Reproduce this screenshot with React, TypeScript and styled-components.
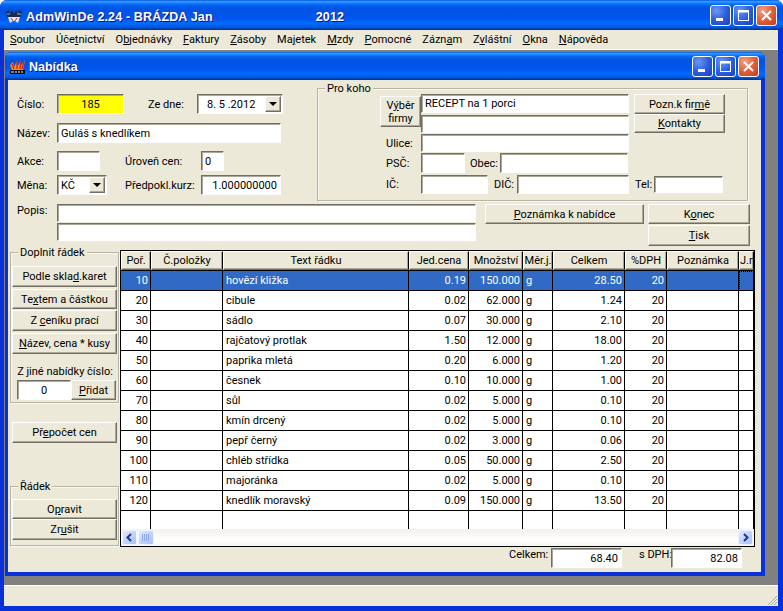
import styled, { createGlobalStyle } from 'styled-components';

const GlobalStyle = createGlobalStyle`
  html, body {
    margin: 0;
    padding: 0;
    background: #fff;
  }
  body {
    font-family: Roboto, 'Liberation Sans', Arial, sans-serif;
    font-size: 11px;
    color: #000;
  }
  u {
    text-underline-offset: 1px;
  }
`;

const TITLE_GRADIENT = `linear-gradient(180deg, #0058e6 0%, #3a93ff 5%, #288eff 8%, #127dff 11%, #036ffc 14%,
  #0262ee 18%, #0057e5 24%, #0054e3 30%, #0055eb 56%, #005bf5 66%, #026afe 76%, #0062ef 86%, #0052d6 92%,
  #0040ab 96%, #003092 100%)`;

const raised = `
  background: #ece9d8;
  border: 1px solid;
  border-color: #fff #716f64 #716f64 #fff;
  box-shadow: inset -1px -1px 0 #aca899;
`;

const Window = styled.div`
  width: 783px;
  height: 611px;
  display: flex;
  flex-direction: column;
  overflow: hidden;
  border-radius: 7px 7px 0 0;
  background: #0831d9;
`;

const TitleBar = styled.div<{ $height: number }>`
  height: ${(p) => p.$height}px;
  flex: none;
  display: flex;
  align-items: center;
  background: ${TITLE_GRADIENT};
  color: #fff;
  font-weight: bold;
`;

const AppTitle = styled.div`
  margin-left: 4px;
  padding-top: 3px;
  font-family: 'Liberation Sans', sans-serif;
  font-size: 12.5px;
  letter-spacing: 0.15px;
  text-shadow: 1px 1px 0 #0f1089;
  white-space: nowrap;
  flex: 1;
  display: flex;
`;

const TitleYear = styled.span`
  margin-left: 103px;
`;

const ChildTitle = styled.div`
  margin-left: 3px;
  padding-top: 2px;
  font-family: 'Liberation Sans', sans-serif;
  font-size: 12.5px;
  text-shadow: 1px 1px 0 #0f1089;
  flex: 1;
`;

const AppIcon = styled.svg`
  margin: 4px 0 0 6px;
  flex: none;
`;

const ChildIcon = styled.svg`
  margin: 1px 0 0 4px;
  flex: none;
`;

const Controls = styled.div<{ $right: number }>`
  display: flex;
  gap: 2px;
  margin: 1px ${(p) => p.$right}px 0 0;
`;

const CtlButton = styled.div<{ $close?: boolean }>`
  width: 21px;
  height: 21px;
  box-sizing: border-box;
  border: 1px solid #fff;
  border-radius: 3px;
  display: flex;
  align-items: center;
  justify-content: center;
  background: ${(p) =>
    p.$close
      ? 'radial-gradient(circle at 30% 25%, #f0a48c 0%, #e2653f 45%, #c23a1a 100%)'
      : 'radial-gradient(circle at 30% 25%, #6d97f5 0%, #2c5fe0 50%, #1a3fc0 100%)'};
`;

const Body = styled.div`
  flex: 1;
  display: flex;
  flex-direction: column;
  min-height: 0;
  margin: 0 5px 5px 4px;
`;

const MenuBar = styled.div`
  height: 20px;
  flex: none;
  display: flex;
  align-items: center;
  gap: 11px;
  padding-left: 6px;
  background: #ece9d8;
  border-bottom: 1px solid #fff;
  box-sizing: border-box;
`;

const MenuItem = styled.span`
  white-space: nowrap;
`;

const MdiArea = styled.div`
  flex: 1;
  min-height: 0;
  background: #808080;
  padding: 2px 13px 9px 1px;
  display: flex;
  flex-direction: column;
`;

const ChildWindow = styled.div`
  flex: 1;
  min-height: 0;
  display: flex;
  flex-direction: column;
  background: #0831d9;
  border-radius: 6px 6px 0 0;
  overflow: hidden;
`;

const Client = styled.div`
  flex: 1;
  min-height: 0;
  margin: 0 4px 4px 3px;
  background: #ece9d8;
  display: flex;
  flex-direction: column;
`;

const TopSection = styled.div`
  display: flex;
  height: 113px;
  margin-top: 8px;
`;

const HeadForm = styled.div`
  width: 300px;
  margin-left: 9px;
  padding-top: 6px;
`;

const Row = styled.div<{ $top?: number; $h?: number }>`
  display: flex;
  align-items: center;
  margin-top: ${(p) => p.$top ?? 0}px;
  height: ${(p) => p.$h ?? 20}px;
`;

const Label = styled.span<{ $w?: number; $left?: number; $pad?: number }>`
  flex: none;
  width: ${(p) => (p.$w ? `${p.$w}px` : 'auto')};
  margin-left: ${(p) => p.$left ?? 0}px;
  padding-left: ${(p) => p.$pad ?? 0}px;
  box-sizing: border-box;
  white-space: nowrap;
`;

const Field = styled.div<{ $w: number; $h?: number; $left?: number; $top?: number; $right?: boolean; $bg?: string; $center?: boolean }>`
  flex: none;
  width: ${(p) => p.$w}px;
  height: ${(p) => p.$h ?? 20}px;
  margin-left: ${(p) => p.$left ?? 0}px;
  margin-top: ${(p) => p.$top ?? 0}px;
  box-sizing: border-box;
  display: flex;
  align-items: center;
  justify-content: ${(p) => (p.$center ? 'center' : p.$right ? 'flex-end' : 'flex-start')};
  padding: 0 3px;
  background: ${(p) => p.$bg ?? '#fff'};
  border: 1px solid;
  border-color: #716f64 #fff #fff #716f64;
  box-shadow: inset 1px 1px 0 #aca899;
  white-space: nowrap;
  overflow: hidden;
`;

const DropBox = styled(Field)`
  padding-right: 0;
  justify-content: space-between;
`;

const DropText = styled.span<{ $pad?: number }>`
  padding-left: ${(p) => p.$pad ?? 0}px;
`;

const DropButton = styled.span`
  ${raised}
  flex: none;
  width: 16px;
  height: 16px;
  box-sizing: border-box;
  display: flex;
  align-items: center;
  justify-content: center;
  margin-right: 1px;
`;

const Arrow = styled.span`
  width: 0;
  height: 0;
  border-left: 4px solid transparent;
  border-right: 4px solid transparent;
  border-top: 4px solid #000;
`;

const Group = styled.div<{ $w: number; $h?: number; $top?: number }>`
  position: relative;
  flex: none;
  width: ${(p) => p.$w}px;
  height: ${(p) => (p.$h ? `${p.$h}px` : 'auto')};
  margin-top: ${(p) => p.$top ?? 0}px;
  box-sizing: border-box;
  border: 1px solid #b8b5a4;
  box-shadow: inset 1px 1px 0 #f8f7f0, 1px 1px 0 #f8f7f0;
`;

const Legend = styled.span`
  position: absolute;
  top: -7px;
  left: 7px;
  padding: 0 2px;
  background: #ece9d8;
  white-space: nowrap;
`;

const Button = styled.div<{ $w?: number; $h?: number; $top?: number; $left?: number }>`
  ${raised}
  flex: none;
  width: ${(p) => (p.$w ? `${p.$w}px` : 'auto')};
  height: ${(p) => p.$h ?? 20}px;
  margin-top: ${(p) => p.$top ?? 0}px;
  margin-left: ${(p) => p.$left ?? 0}px;
  box-sizing: border-box;
  display: flex;
  align-items: center;
  justify-content: center;
  text-align: center;
  white-space: nowrap;
`;

const CustomerGroup = styled(Group)`
  padding: 5px 0 0 62px;
`;

const CustomerTop = styled.div`
  display: flex;
  height: 40px;
`;

const PickButton = styled(Button)`
  line-height: 13px;
`;

const Stack = styled.div<{ $left?: number }>`
  display: flex;
  flex-direction: column;
  margin-left: ${(p) => p.$left ?? 0}px;
`;

const NoteSection = styled.div`
  display: flex;
  margin: 3px 0 0 9px;
  height: 41px;
`;

const Main = styled.div`
  display: flex;
  margin: 5px 0 0 2px;
`;

const SidePanel = styled.div`
  width: 110px;
  flex: none;
  padding-top: 2px;
`;

const AddGroup = styled(Group)`
  padding: 13px 0 0 1px;
`;

const SideButtons = styled.div`
  display: flex;
  flex-direction: column;
`;

const OtherLabel = styled.div`
  margin-top: 11px;
  height: 15px;
  text-align: center;
  white-space: nowrap;
`;

const RecalcWrap = styled.div`
  padding: 19px 0 0 2px;
`;

const LineGroup = styled(Group)`
  padding: 12px 0 0 1px;
`;

const RightPanel = styled.div`
  width: 635px;
  flex: none;
`;

const Table = styled.div`
  height: 297px;
  box-sizing: border-box;
  border: 1px solid #000;
  background: #fff;
  display: flex;
  flex-direction: column;
  overflow: hidden;
`;

const TableRows = styled.div`
  flex: 1;
  min-height: 0;
  overflow: hidden;
`;

const GridRow = styled.div`
  display: grid;
  grid-template-columns: 30px 72px 186px 60px 54px 30px 72px 42px 72px 15px;
  height: 20px;
`;

const HeadCell = styled.div<{ $clip?: boolean }>`
  ${raised}
  box-sizing: border-box;
  height: 19px;
  border-right: 1px solid #000;
  border-bottom: 1px solid #716f64;
  display: flex;
  align-items: center;
  justify-content: ${(p) => (p.$clip ? 'flex-start' : 'center')};
  overflow: hidden;
  white-space: nowrap;
`;

const HeadLine = styled.div`
  height: 1px;
  background: #000;
  margin-top: -1px;
`;

const Cell = styled.div<{ $right?: boolean; $active?: boolean; $focus?: boolean }>`
  box-sizing: border-box;
  height: 20px;
  border-right: 1px solid #000;
  border-bottom: 1px solid #000;
  padding: 0 ${(p) => (p.$right ? 2 : 3)}px;
  display: flex;
  align-items: center;
  justify-content: ${(p) => (p.$right ? 'flex-end' : 'flex-start')};
  background: ${(p) => (p.$active ? '#316ac5' : '#fff')};
  color: ${(p) => (p.$active ? '#fff' : '#000')};
  outline: ${(p) => (p.$focus ? '1px dotted #000' : 'none')};
  outline-offset: -1px;
  white-space: nowrap;
  overflow: hidden;
`;

const ScrollBar = styled.div`
  height: 17px;
  flex: none;
  display: flex;
  align-items: center;
  justify-content: space-between;
  padding: 0 1px;
  background: linear-gradient(180deg, #f3f1ec 0%, #fefefb 60%, #f6f5ef 100%);
`;

const ScrollLeft = styled.div`
  display: flex;
  gap: 1px;
`;

const ScrollButton = styled.div`
  width: 15px;
  height: 15px;
  box-sizing: border-box;
  border: 1px solid #eef3fd;
  border-radius: 2px;
  background: linear-gradient(135deg, #e2ebfd 0%, #c3d3fb 50%, #abc2f7 100%);
  display: flex;
  align-items: center;
  justify-content: center;
`;

const ScrollThumb = styled(ScrollButton)`
  width: 16px;
`;

const Footer = styled.div`
  display: flex;
  align-items: flex-start;
  height: 20px;
  margin-top: 1px;
`;

const FooterLabel = styled.span<{ $w: number; $left: number }>`
  width: ${(p) => p.$w}px;
  margin-left: ${(p) => p.$left}px;
  flex: none;
  white-space: nowrap;
  line-height: 13px;
`;

const StatusBar = styled.div`
  height: 21px;
  flex: none;
  background: #ece9d8;
  border-top: 1px solid #fff;
  box-sizing: border-box;
  display: flex;
  align-items: flex-end;
  justify-content: flex-end;
`;

const menus: [string, string, string][] = [
  ['', 'S', 'oubor'],
  ['Úče', 't', 'nictví'],
  ['O', 'b', 'jednávky'],
  ['', 'F', 'aktury'],
  ['', 'Z', 'ásoby'],
  ['Ma', 'j', 'etek'],
  ['', 'M', 'zdy'],
  ['', 'P', 'omocné'],
  ['Zázn', 'a', 'm'],
  ['Z', 'v', 'láštní'],
  ['', 'O', 'kna'],
  ['', 'N', 'ápověda'],
];

const columns = ['Poř.', 'Č.položky', 'Text řádku', 'Jed.cena', 'Množství', 'Měr.j.', 'Celkem', '%DPH', 'Poznámka', 'J.n'];

const rows = [
  ['10', 'hovězí kližka', '0.19', '150.000', '28.50'],
  ['20', 'cibule', '0.02', '62.000', '1.24'],
  ['30', 'sádlo', '0.07', '30.000', '2.10'],
  ['40', 'rajčatový protlak', '1.50', '12.000', '18.00'],
  ['50', 'paprika mletá', '0.20', '6.000', '1.20'],
  ['60', 'česnek', '0.10', '10.000', '1.00'],
  ['70', 'sůl', '0.02', '5.000', '0.10'],
  ['80', 'kmín drcený', '0.02', '5.000', '0.10'],
  ['90', 'pepř černý', '0.02', '3.000', '0.06'],
  ['100', 'chléb střídka', '0.05', '50.000', '2.50'],
  ['110', 'majoránka', '0.02', '5.000', '0.10'],
  ['120', 'knedlík moravský', '0.09', '150.000', '13.50'],
];

const WindowControls = ({ right }: { right: number }) => (
  <Controls $right={right}>
    <CtlButton>
      <svg width="13" height="13" viewBox="0 0 13 13">
        <rect x="2" y="9" width="7" height="3" fill="#fff" />
      </svg>
    </CtlButton>
    <CtlButton>
      <svg width="13" height="13" viewBox="0 0 13 13">
        <rect x="1.5" y="1.5" width="10" height="10" fill="none" stroke="#fff" />
        <rect x="1" y="1" width="11" height="2.5" fill="#fff" />
      </svg>
    </CtlButton>
    <CtlButton $close>
      <svg width="13" height="13" viewBox="0 0 13 13">
        <path d="M2 2 L11 11 M11 2 L2 11" stroke="#fff" strokeWidth="2" />
      </svg>
    </CtlButton>
  </Controls>
);

const App = () => {
  return (
    <>
      <GlobalStyle />
      <Window>
        <TitleBar $height={30}>
          <AppIcon width="16" height="16" viewBox="0 0 16 16">
            <path d="M0 3 L3 1 L4 5 L6 1 L8 5 L10 1 L12 5 L13 1 L16 3 L14 9 L2 9 Z" fill="#182c4c" />
            <path d="M2 8 L14 8 L12 14 L9 12 L7 12 L4 14 Z" fill="#e8e6f0" />
            <path d="M5 9 L7 12 M11 9 L9 12" stroke="#b03050" />
            <path d="M1 5 L4 5 M11 5 L15 5" stroke="#8fb4ec" />
          </AppIcon>
          <AppTitle>
            <span>AdmWinDe 2.24 - BRÁZDA Jan</span>
            <TitleYear>2012</TitleYear>
          </AppTitle>
          <WindowControls right={6} />
        </TitleBar>
        <Body>
          <MenuBar>
            {menus.map(([before, key, after]) => (
              <MenuItem key={before + key + after}>
                {before}
                <u>{key}</u>
                {after}
              </MenuItem>
            ))}
          </MenuBar>
          <MdiArea>
            <ChildWindow>
              <TitleBar $height={28}>
                <ChildIcon width="17" height="16" viewBox="0 0 17 16">
                  <path d="M1 6 L4 3 L5 8 L8 2 L9 7 L12 1 L12 6 L16 1 L14 11 L3 11 Z" fill="#f4901c" />
                  <path d="M3 5 L5 10 M8 3 L8 10 M12 2 L11 10 M15 2 L13 10" stroke="#d8200c" strokeWidth="1.3" />
                  <rect x="1" y="11" width="15" height="4" fill="#0c0c0c" />
                  <path d="M2 13 L5 13 M7 12 L7 14 M9 13 L11 13 M13 12 L13 14" stroke="#fff" />
                </ChildIcon>
                <ChildTitle>Nabídka</ChildTitle>
                <WindowControls right={6} />
              </TitleBar>
              <Client>
                <TopSection>
                  <HeadForm>
                    <Row>
                      <Label $w={40}>Číslo:</Label>
                      <Field $w={67} $bg="#ffff00" $center>
                        185
                      </Field>
                      <Label $w={49} $left={24}>
                        Ze dne:
                      </Label>
                      <DropBox $w={86}>
                        <DropText $pad={6}>8. 5 .2012</DropText>
                        <DropButton>
                          <Arrow />
                        </DropButton>
                      </DropBox>
                    </Row>
                    <Row $top={9}>
                      <Label $w={40}>Název:</Label>
                      <Field $w={224}>Guláš s knedlíkem</Field>
                    </Row>
                    <Row $top={8}>
                      <Label $w={40}>Akce:</Label>
                      <Field $w={43} />
                      <Label $w={76} $left={25}>
                        Úroveň cen:
                      </Label>
                      <Field $w={23}>0</Field>
                    </Row>
                    <Row $top={4}>
                      <Label $w={40}>Měna:</Label>
                      <DropBox $w={50}>
                        <DropText>KČ</DropText>
                        <DropButton>
                          <Arrow />
                        </DropButton>
                      </DropBox>
                      <Label $w={76} $left={18}>
                        Předpokl.kurz:
                      </Label>
                      <Field $w={80} $right>
                        1.000000000
                      </Field>
                    </Row>
                  </HeadForm>
                  <CustomerGroup $w={431} $h={113}>
                    <Legend>Pro koho</Legend>
                    <CustomerTop>
                      <PickButton $w={41} $h={31} $top={2}>
                        <span>
                          V<u>ý</u>běr
                          <br />
                          firmy
                        </span>
                      </PickButton>
                      <Stack>
                        <Field $w={208} $h={19}>
                          RECEPT na 1 porci
                        </Field>
                        <Field $w={208} $h={18} $top={2} />
                      </Stack>
                      <Stack $left={5}>
                        <Button $w={91} $h={20}>
                          <span>
                            Pozn.k fir<u>m</u>ě
                          </span>
                        </Button>
                        <Button $w={91} $h={19}>
                          <span>
                            <u>K</u>ontakty
                          </span>
                        </Button>
                      </Stack>
                    </CustomerTop>
                    <Row $h={18} $top={0}>
                      <Label $w={41} $pad={6}>
                        Ulice:
                      </Label>
                      <Field $w={208} $h={18} />
                    </Row>
                    <Row $h={20} $top={1}>
                      <Label $w={41} $pad={6}>
                        PSČ:
                      </Label>
                      <Field $w={44} />
                      <Label $w={30} $left={5}>
                        Obec:
                      </Label>
                      <Field $w={128} />
                    </Row>
                    <Row $h={19} $top={2}>
                      <Label $w={41} $pad={6}>
                        IČ:
                      </Label>
                      <Field $w={67} $h={19} />
                      <Label $w={23} $left={6}>
                        DIČ:
                      </Label>
                      <Field $w={112} $h={19} />
                      <Label $w={19} $left={6}>
                        Tel:
                      </Label>
                      <Field $w={69} $h={17} />
                    </Row>
                  </CustomerGroup>
                </TopSection>
                <NoteSection>
                  <Label $w={40}>Popis:</Label>
                  <Stack>
                    <Field $w={419} $h={18} />
                    <Field $w={419} $h={18} $top={1} />
                  </Stack>
                  <Button $w={159} $h={20} $left={9}>
                    <span>
                      <u>P</u>oznámka k nabídce
                    </span>
                  </Button>
                  <Stack $left={4}>
                    <Button $w={102} $h={20}>
                      <span>
                        K<u>o</u>nec
                      </span>
                    </Button>
                    <Button $w={102} $h={21} $top={1}>
                      <span>
                        <u>T</u>isk
                      </span>
                    </Button>
                  </Stack>
                </NoteSection>
                <Main>
                  <SidePanel>
                    <AddGroup $w={109} $h={151}>
                      <Legend>Doplnit řádek</Legend>
                      <SideButtons>
                        <Button $w={105} $h={21}>
                          <span>
                            Podle skla<u>d</u>.karet
                          </span>
                        </Button>
                        <Button $w={105} $h={20} $top={2}>
                          <span>
                            Te<u>x</u>tem a částkou
                          </span>
                        </Button>
                        <Button $w={105} $h={21} $top={1}>
                          <span>
                            Z <u>c</u>eníku prací
                          </span>
                        </Button>
                        <Button $w={105} $h={21} $top={2}>
                          <span>
                            <u>N</u>ázev, cena * kusy
                          </span>
                        </Button>
                      </SideButtons>
                      <OtherLabel>Z jiné nabídky číslo:</OtherLabel>
                      <Row>
                        <Field $w={54} $left={5} $center>
                          0
                        </Field>
                        <Button $w={45} $h={20}>
                          <span>
                            <u>P</u>řidat
                          </span>
                        </Button>
                      </Row>
                    </AddGroup>
                    <RecalcWrap>
                      <Button $w={105} $h={21}>
                        <span>
                          Př<u>e</u>počet cen
                        </span>
                      </Button>
                    </RecalcWrap>
                    <LineGroup $w={109} $h={60} $top={43}>
                      <Legend>Řádek</Legend>
                      <SideButtons>
                        <Button $w={105} $h={20}>
                          <span>
                            O<u>p</u>ravit
                          </span>
                        </Button>
                        <Button $w={105} $h={21}>
                          <span>
                            Zr<u>u</u>šit
                          </span>
                        </Button>
                      </SideButtons>
                    </LineGroup>
                  </SidePanel>
                  <RightPanel>
                    <Table>
                      <GridRow>
                        {columns.map((name) => (
                          <HeadCell key={name} $clip={name === 'J.n'}>
                            {name}
                          </HeadCell>
                        ))}
                      </GridRow>
                      <HeadLine />
                      <TableRows>
                        {rows.map((row, i) => (
                          <GridRow key={row[0]}>
                            <Cell $right $active={i === 0}>
                              {row[0]}
                            </Cell>
                            <Cell $active={i === 0} />
                            <Cell $active={i === 0}>{row[1]}</Cell>
                            <Cell $right $active={i === 0}>
                              {row[2]}
                            </Cell>
                            <Cell $right $active={i === 0}>
                              {row[3]}
                            </Cell>
                            <Cell $active={i === 0}>g</Cell>
                            <Cell $right $active={i === 0}>
                              {row[4]}
                            </Cell>
                            <Cell $right $active={i === 0}>
                              20
                            </Cell>
                            <Cell $active={i === 0} />
                            <Cell $active={i === 0} $focus={i === 0} />
                          </GridRow>
                        ))}
                        <GridRow>
                          {columns.map((name) => (
                            <Cell key={name} />
                          ))}
                        </GridRow>
                      </TableRows>
                      <ScrollBar>
                        <ScrollLeft>
                          <ScrollButton>
                            <svg width="9" height="9" viewBox="0 0 9 9">
                              <path d="M6 1 L2.5 4.5 L6 8" fill="none" stroke="#1c3a8c" strokeWidth="2" />
                            </svg>
                          </ScrollButton>
                          <ScrollThumb>
                            <svg width="8" height="7" viewBox="0 0 8 7">
                              <path d="M0.5 0 V7 M2.5 0 V7 M4.5 0 V7 M6.5 0 V7" stroke="#8fa8e8" />
                            </svg>
                          </ScrollThumb>
                        </ScrollLeft>
                        <ScrollButton>
                          <svg width="9" height="9" viewBox="0 0 9 9">
                            <path d="M3 1 L6.5 4.5 L3 8" fill="none" stroke="#1c3a8c" strokeWidth="2" />
                          </svg>
                        </ScrollButton>
                      </ScrollBar>
                    </Table>
                    <Footer>
                      <FooterLabel $w={42} $left={389}>
                        Celkem:
                      </FooterLabel>
                      <Field $w={71} $right>
                        68.40
                      </Field>
                      <FooterLabel $w={32} $left={17}>
                        s DPH:
                      </FooterLabel>
                      <Field $w={71} $right>
                        82.08
                      </Field>
                    </Footer>
                  </RightPanel>
                </Main>
              </Client>
            </ChildWindow>
          </MdiArea>
          <StatusBar>
            <svg width="12" height="12" viewBox="0 0 12 12">
              <path d="M11 2 L2 11 M11 5 L5 11 M11 8 L8 11" stroke="#aca899" />
            </svg>
          </StatusBar>
        </Body>
      </Window>
    </>
  );
};

export default App;
